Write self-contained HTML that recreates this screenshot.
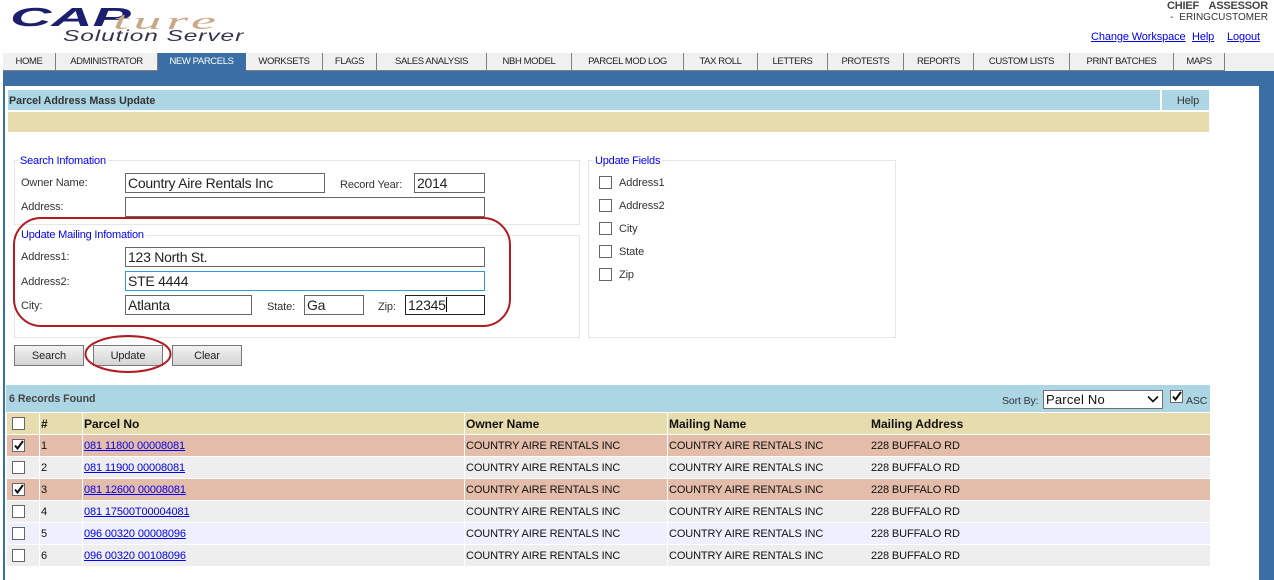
<!DOCTYPE html>
<html>
<head>
<meta charset="utf-8">
<style>
html,body{margin:0;padding:0;background:#fff;}
body{width:1274px;height:580px;overflow:hidden;position:relative;font-family:"Liberation Sans",Arial,sans-serif;font-size:11px;color:#333;letter-spacing:-.12px;}
.a{position:absolute;white-space:nowrap;}
.lb{margin-top:1px;}
.tab{position:absolute;top:53px;height:17px;line-height:18px;background:#f0f0f0;border-right:1px solid #808080;border-bottom:1px solid #808080;text-align:center;font-size:9.5px;letter-spacing:-.4px;color:#222;box-sizing:content-box;}
.tab.on{background:#3a6ea5;color:#fff;border-color:#3a6ea5;}
.fs{position:absolute;border:1px solid #e6e6e6;box-sizing:border-box;}
.lg{position:absolute;background:#fff;color:#0000ff;font-size:11px;letter-spacing:-.2px;line-height:13px;padding:0 2px;white-space:nowrap;margin-top:1px;}
.in{position:absolute;box-sizing:border-box;height:20px;border:1px solid #666;background:#fff;font-size:14px;letter-spacing:-.25px;line-height:19px;padding-left:2px;color:#222;white-space:nowrap;}
.btn{position:absolute;top:345px;width:70px;height:21px;box-sizing:border-box;border:1px solid #777;background:linear-gradient(#f2f2f2,#d4d4d4);text-align:center;line-height:21px;font-size:11px;color:#222;}
.cb{position:absolute;width:13px;height:13px;box-sizing:border-box;border:1px solid #666;background:#fff;}
.cb svg{position:absolute;left:0;top:0;}
.cell{position:absolute;height:21px;line-height:23px;font-size:11px;color:#111;white-space:nowrap;overflow:hidden;box-sizing:border-box;padding-left:1px;}
.hd{font-weight:bold;font-size:12px;letter-spacing:0;background:#e6dcae;color:#111;}
a{color:#0000ee;text-decoration:underline;}
</style>
</head>
<body>
<!-- logo -->
<div class="a" style="left:3px;top:0;width:241px;height:46px;overflow:hidden;letter-spacing:0;">
<div class="a" style="left:7px;top:1.5px;font:italic bold 26px/30px 'Liberation Sans',sans-serif;color:#1c1f6e;transform:scaleX(2.2);transform-origin:0 0;">CAP</div>
<div class="a" style="left:110px;top:8px;font:italic 24px/28px 'Liberation Serif',serif;color:#c8a888;letter-spacing:2px;transform:scaleX(2.35);transform-origin:0 0;">ture</div>
<div class="a" style="left:60px;top:26.5px;font:italic 16px/20px 'Liberation Sans',sans-serif;color:#33344f;letter-spacing:.6px;transform:scaleX(1.53);transform-origin:0 0;">Solution Server</div>
</div>

<!-- top right -->
<div class="a" style="right:6px;top:0;font-size:11px;line-height:13px;font-weight:bold;color:#444;letter-spacing:-.2px;word-spacing:7px;">CHIEF ASSESSOR</div>
<div class="a" style="right:6px;top:10.5px;font-size:10px;line-height:13px;color:#333;letter-spacing:0;word-spacing:3px;">- ERINGCUSTOMER</div>
<a class="a" style="left:1091px;top:31px;font-size:11px;line-height:13px;">Change Workspace</a>
<a class="a" style="left:1192px;top:31px;font-size:11px;line-height:13px;">Help</a>
<a class="a" style="left:1227px;top:31px;font-size:11px;line-height:13px;">Logout</a>

<!-- tab strip -->
<div class="a" style="left:3px;top:53px;width:1271px;height:18px;background:#f0f0f0;"></div>
<div class="a" style="left:3px;top:71px;width:1271px;height:15px;background:#3a6ea5;"></div>
<div class="a" style="left:3px;top:86px;width:2px;height:494px;background:#3a6ea5;"></div>
<div class="a" style="left:1259px;top:86px;width:15px;height:494px;background:#3a6ea5;"></div>

<div class="tab" style="left:3px;width:52px;">HOME</div>
<div class="tab" style="left:56px;width:101px;">ADMINISTRATOR</div>
<div class="tab on" style="left:158px;width:87px;">NEW PARCELS</div>
<div class="tab" style="left:246px;width:76px;">WORKSETS</div>
<div class="tab" style="left:323px;width:53px;">FLAGS</div>
<div class="tab" style="left:377px;width:109px;">SALES ANALYSIS</div>
<div class="tab" style="left:487px;width:84px;">NBH MODEL</div>
<div class="tab" style="left:572px;width:111px;">PARCEL MOD LOG</div>
<div class="tab" style="left:684px;width:73px;">TAX ROLL</div>
<div class="tab" style="left:758px;width:69px;">LETTERS</div>
<div class="tab" style="left:828px;width:75px;">PROTESTS</div>
<div class="tab" style="left:904px;width:69px;">REPORTS</div>
<div class="tab" style="left:974px;width:95px;">CUSTOM LISTS</div>
<div class="tab" style="left:1070px;width:103px;">PRINT BATCHES</div>
<div class="tab" style="left:1174px;width:50px;">MAPS</div>

<!-- title -->
<div class="a" style="left:8px;top:90px;width:1152px;height:20px;background:#add6e5;font-weight:bold;font-size:10.7px;letter-spacing:0;line-height:22px;padding-left:1px;box-sizing:border-box;color:#333;">Parcel Address Mass Update</div>
<div class="a" style="left:1162px;top:90px;height:20px;background:#add6e5;font-size:11px;line-height:22px;text-align:center;color:#333;width:47px;padding-left:5px;box-sizing:border-box;">Help</div>
<div class="a" style="left:8px;top:112px;width:1201px;height:20px;background:#e6dcae;"></div>

<!-- fieldsets -->
<div class="fs" style="left:14px;top:160px;width:566px;height:65px;"></div>
<div class="lg" style="left:18px;top:154px;">Search Infomation</div>
<div class="fs" style="left:14px;top:235px;width:566px;height:103px;"></div>
<div class="lg" style="left:19px;top:228px;">Update Mailing Infomation</div>
<div class="fs" style="left:588px;top:160px;width:308px;height:178px;"></div>
<div class="lg" style="left:593px;top:154px;">Update Fields</div>

<div class="a lb" style="left:21px;top:176px;line-height:13px;">Owner Name:</div>
<div class="in" style="left:125px;top:173px;width:200px;">Country Aire Rentals Inc</div>
<div class="a lb" style="left:340px;top:178px;line-height:13px;">Record Year:</div>
<div class="in" style="left:414px;top:173px;width:71px;">2014</div>
<div class="a lb" style="left:21px;top:200px;line-height:13px;">Address:</div>
<div class="in" style="left:125px;top:197px;width:360px;"></div>

<div class="a lb" style="left:21px;top:250px;line-height:13px;">Address1:</div>
<div class="in" style="left:125px;top:247px;width:360px;">123 North St.</div>
<div class="a lb" style="left:21px;top:275px;line-height:13px;">Address2:</div>
<div class="in" style="left:125px;top:271px;width:360px;border-color:#2f9bd0;">STE 4444</div>
<div class="a lb" style="left:21px;top:299px;line-height:13px;">City:</div>
<div class="in" style="left:125px;top:295px;width:127px;">Atlanta</div>
<div class="a lb" style="left:267px;top:300px;line-height:13px;">State:</div>
<div class="in" style="left:304px;top:295px;width:60px;">Ga</div>
<div class="a lb" style="left:378px;top:300px;line-height:13px;">Zip:</div>
<div class="in" style="left:405px;top:295px;width:80px;border-color:#222;">12345<span style="display:inline-block;width:1px;height:15px;background:#000;vertical-align:-2px;"></span></div>

<!-- update fields -->
<div class="cb" style="left:599px;top:176px;"></div><div class="a lb" style="left:619px;top:176px;line-height:13px;">Address1</div>
<div class="cb" style="left:599px;top:199px;"></div><div class="a lb" style="left:619px;top:199px;line-height:13px;">Address2</div>
<div class="cb" style="left:599px;top:222px;"></div><div class="a lb" style="left:619px;top:222px;line-height:13px;">City</div>
<div class="cb" style="left:599px;top:245px;"></div><div class="a lb" style="left:619px;top:245px;line-height:13px;">State</div>
<div class="cb" style="left:599px;top:268px;"></div><div class="a lb" style="left:619px;top:268px;line-height:13px;">Zip</div>

<!-- buttons -->
<div class="btn" style="left:14px;">Search</div>
<div class="btn" style="left:93px;">Update</div>
<div class="btn" style="left:172px;">Clear</div>

<!-- red marks -->
<svg class="a" style="left:0;top:0;" width="1274" height="580" fill="none" stroke="#b01c22" stroke-width="2">
<rect x="14" y="218" width="496" height="108" rx="27" ry="27"/>
<ellipse cx="128" cy="354" rx="42.5" ry="18"/>
</svg>

<!-- results header -->
<div class="a" style="left:6px;top:385px;width:1204px;height:27px;background:#add6e5;"></div>
<div class="a lb" style="left:9px;top:392px;font-weight:bold;font-size:10.6px;letter-spacing:0;line-height:13px;color:#444;">6 Records Found</div>
<div class="a lb" style="left:1002px;top:394px;font-size:10.5px;line-height:13px;color:#333;">Sort By:</div>
<div class="a" style="left:1043px;top:390px;width:120px;height:19px;box-sizing:border-box;border:1px solid #707070;background:#fff;font-size:13px;line-height:17px;padding-left:2px;color:#111;letter-spacing:.2px;">Parcel No
<svg class="a" style="right:3px;top:4px;" width="12" height="9" fill="none" stroke="#111" stroke-width="1.6"><path d="M1 1.5 L6 6.5 L11 1.5"/></svg></div>
<div class="cb" style="left:1170px;top:390px;"><svg width="11" height="11" fill="none" stroke="#111" stroke-width="2"><path d="M2 5.5 L4.5 8.5 L10 1"/></svg></div>
<div class="a lb" style="left:1186px;top:394px;font-size:10.5px;line-height:13px;color:#333;">ASC</div>

<!-- table header -->
<div class="cell hd" style="left:7px;top:413px;width:32px;"></div>
<div class="cell hd" style="left:40px;top:413px;width:42px;">#</div>
<div class="cell hd" style="left:83px;top:413px;width:381px;">Parcel No</div>
<div class="cell hd" style="left:465px;top:413px;width:202px;">Owner Name</div>
<div class="cell hd" style="left:668px;top:413px;width:202px;">Mailing Name</div>
<div class="cell hd" style="left:870px;top:413px;width:340px;">Mailing Address</div>
<div class="cb" style="left:12px;top:417px;"></div>

<!-- row 1 -->
<div class="cell" style="left:7px;top:435px;width:32px;background:#e4bdaa;"></div>
<div class="cell" style="left:40px;top:435px;width:42px;background:#e4bdaa;">1</div>
<div class="cell" style="left:83px;top:435px;width:381px;background:#e4bdaa;"><a>081 11800 00008081</a></div>
<div class="cell" style="left:465px;top:435px;width:202px;background:#e4bdaa;">COUNTRY AIRE RENTALS INC</div>
<div class="cell" style="left:668px;top:435px;width:202px;background:#e4bdaa;">COUNTRY AIRE RENTALS INC</div>
<div class="cell" style="left:870px;top:435px;width:340px;background:#e4bdaa;">228 BUFFALO RD</div>
<div class="cb" style="left:12px;top:439px;"><svg width="11" height="11" fill="none" stroke="#111" stroke-width="2"><path d="M2 5.5 L4.5 8.5 L10 1"/></svg></div>

<!-- row 2 -->
<div class="cell" style="left:7px;top:457px;width:32px;background:#eee;"></div>
<div class="cell" style="left:40px;top:457px;width:42px;background:#eee;">2</div>
<div class="cell" style="left:83px;top:457px;width:381px;background:#eee;"><a>081 11900 00008081</a></div>
<div class="cell" style="left:465px;top:457px;width:202px;background:#eee;">COUNTRY AIRE RENTALS INC</div>
<div class="cell" style="left:668px;top:457px;width:202px;background:#eee;">COUNTRY AIRE RENTALS INC</div>
<div class="cell" style="left:870px;top:457px;width:340px;background:#eee;">228 BUFFALO RD</div>
<div class="cb" style="left:12px;top:461px;"></div>

<!-- row 3 -->
<div class="cell" style="left:7px;top:479px;width:32px;background:#e4bdaa;"></div>
<div class="cell" style="left:40px;top:479px;width:42px;background:#e4bdaa;">3</div>
<div class="cell" style="left:83px;top:479px;width:381px;background:#e4bdaa;"><a>081 12600 00008081</a></div>
<div class="cell" style="left:465px;top:479px;width:202px;background:#e4bdaa;">COUNTRY AIRE RENTALS INC</div>
<div class="cell" style="left:668px;top:479px;width:202px;background:#e4bdaa;">COUNTRY AIRE RENTALS INC</div>
<div class="cell" style="left:870px;top:479px;width:340px;background:#e4bdaa;">228 BUFFALO RD</div>
<div class="cb" style="left:12px;top:483px;"><svg width="11" height="11" fill="none" stroke="#111" stroke-width="2"><path d="M2 5.5 L4.5 8.5 L10 1"/></svg></div>

<!-- row 4 -->
<div class="cell" style="left:7px;top:501px;width:32px;background:#eee;"></div>
<div class="cell" style="left:40px;top:501px;width:42px;background:#eee;">4</div>
<div class="cell" style="left:83px;top:501px;width:381px;background:#eee;"><a>081 17500T00004081</a></div>
<div class="cell" style="left:465px;top:501px;width:202px;background:#eee;">COUNTRY AIRE RENTALS INC</div>
<div class="cell" style="left:668px;top:501px;width:202px;background:#eee;">COUNTRY AIRE RENTALS INC</div>
<div class="cell" style="left:870px;top:501px;width:340px;background:#eee;">228 BUFFALO RD</div>
<div class="cb" style="left:12px;top:505px;"></div>

<!-- row 5 -->
<div class="cell" style="left:7px;top:523px;width:32px;background:#eef0ff;"></div>
<div class="cell" style="left:40px;top:523px;width:42px;background:#eef0ff;">5</div>
<div class="cell" style="left:83px;top:523px;width:381px;background:#eef0ff;"><a>096 00320 00008096</a></div>
<div class="cell" style="left:465px;top:523px;width:202px;background:#eef0ff;">COUNTRY AIRE RENTALS INC</div>
<div class="cell" style="left:668px;top:523px;width:202px;background:#eef0ff;">COUNTRY AIRE RENTALS INC</div>
<div class="cell" style="left:870px;top:523px;width:340px;background:#eef0ff;">228 BUFFALO RD</div>
<div class="cb" style="left:12px;top:527px;"></div>

<!-- row 6 -->
<div class="cell" style="left:7px;top:545px;width:32px;background:#eee;"></div>
<div class="cell" style="left:40px;top:545px;width:42px;background:#eee;">6</div>
<div class="cell" style="left:83px;top:545px;width:381px;background:#eee;"><a>096 00320 00108096</a></div>
<div class="cell" style="left:465px;top:545px;width:202px;background:#eee;">COUNTRY AIRE RENTALS INC</div>
<div class="cell" style="left:668px;top:545px;width:202px;background:#eee;">COUNTRY AIRE RENTALS INC</div>
<div class="cell" style="left:870px;top:545px;width:340px;background:#eee;">228 BUFFALO RD</div>
<div class="cb" style="left:12px;top:549px;"></div>
</body>
</html>
